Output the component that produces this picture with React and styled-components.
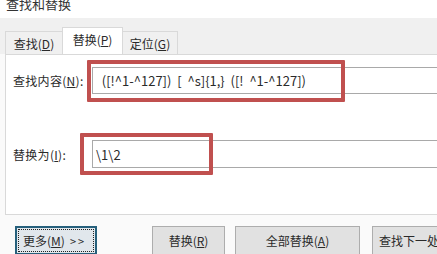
import React from "react";
import styled, { createGlobalStyle } from "styled-components";

const Global = createGlobalStyle`
  html, body { margin: 0; padding: 0; background: #fafafa; }
  body { font-family: "Noto Sans CJK SC", "Liberation Sans", sans-serif; }
`;

const Dialog = styled.div`
  width: 437px;
  height: 254px;
  overflow: hidden;
  background: #fafafa;
  display: flex;
  flex-direction: column;
  color: #2a2a2a;
  font-size: 12px;
`;

const TitleBar = styled.div`
  height: 18px;
  background: #fff;
  padding-left: 6px;
  overflow: hidden;
  flex: none;
`;

const Title = styled.div`
  font-size: 13px;
  line-height: 13px;
  margin-top: -3px;
  color: #333;
`;

const TabStrip = styled.div`
  height: 36px;
  background: #f0f0f0;
  padding-left: 5px;
  display: flex;
  align-items: flex-end;
  flex: none;
`;

const Tab = styled.div`
  box-sizing: border-box;
  width: ${(p) => p.w}px;
  height: ${(p) => (p.active ? 27 : 23)}px;
  background: ${(p) => (p.active ? "#fff" : "#f0f0f0")};
  border: 1px solid #d9d9d9;
  border-bottom: none;
  margin-left: ${(p) => (p.first ? 0 : -1)}px;
  display: flex;
  align-items: center;
  justify-content: center;
  padding-bottom: ${(p) => (p.active ? 3 : 0)}px;
  font-size: 12px;
  position: relative;
  z-index: ${(p) => (p.active ? 1 : 0)};
`;

const Panel = styled.div`
  box-sizing: border-box;
  margin-left: 5px;
  height: 161px;
  background: #fff;
  border: 1px solid #d9d9d9;
  border-right: none;
  padding: 12px 0 0 7px;
  display: flex;
  flex-direction: column;
  gap: 46px;
  flex: none;
`;

const Row = styled.div`
  display: flex;
  align-items: center;
`;

const Label = styled.div`
  width: 79px;
  flex: none;
  font-size: 12px;
  white-space: nowrap;
  letter-spacing: 0.3px;
`;

const InputWrap = styled.div`
  position: relative;
  flex: 1;
`;

const Input = styled.div`
  box-sizing: border-box;
  height: ${(p) => p.h}px;
  border: 1px solid #a9a9a9;
  border-right: none;
  background: #fff;
  padding-left: 3px;
  display: flex;
  align-items: center;
  white-space: pre;
  font-family: "Noto Sans CJK SC", "Liberation Sans", sans-serif;
  font-size: ${(p) => p.fs}px;
  color: #2a2a2a;
`;

const Highlight = styled.div`
  position: absolute;
  box-sizing: border-box;
  left: ${(p) => p.x}px;
  top: -7px;
  width: ${(p) => p.w}px;
  height: 42px;
  border: 4px solid #c0504f;
  border-radius: 1px;
  pointer-events: none;
`;

const ButtonRow = styled.div`
  display: flex;
  padding: 11px 0 0 15px;
  flex: none;
`;

const Button = styled.div`
  box-sizing: border-box;
  flex: none;
  width: ${(p) => p.w}px;
  height: 29px;
  margin-left: ${(p) => p.ml || 0}px;
  background: ${(p) => (p.focus ? "#e1e7ec" : "#e1e1e1")};
  border: ${(p) => (p.focus ? "2px solid #26607c" : "1px solid #adadad")};
  display: flex;
  align-items: center;
  justify-content: ${(p) => (p.left ? "flex-start" : "center")};
  padding-left: ${(p) => (p.left ? 6 : 0)}px;
  font-size: 12px;
  white-space: nowrap;
  position: relative;
  &::after {
    content: "";
    display: ${(p) => (p.focus ? "block" : "none")};
    position: absolute;
    inset: 1px;
    border: 1px dotted #222;
  }
`;

const Arrows = styled.span`
  margin-left: 5px;
  letter-spacing: 2px;
  font-size: 11px;
`;

export default function App() {
  return (
    <>
      <Global />
      <Dialog>
        <TitleBar>
          <Title>查找和替换</Title>
        </TitleBar>
        <TabStrip>
          <Tab first w={58}>
            查找(<u>D</u>)
          </Tab>
          <Tab active w={61}>
            替换(<u>P</u>)
          </Tab>
          <Tab w={56}>
            定位(<u>G</u>)
          </Tab>
        </TabStrip>
        <Panel>
          <Row>
            <Label>
              查找内容(<u>N</u>):
            </Label>
            <InputWrap>
              <Input h={27} fs={13}>{"  ([!^1-^127])  [  ^s]{1,}  ([!  ^1-^127])"}</Input>
              <Highlight x={-5} w={258} />
            </InputWrap>
          </Row>
          <Row>
            <Label>
              替换为(<u>I</u>):
            </Label>
            <InputWrap>
              <Input h={28} fs={13}>{"\\1\\2"}</Input>
              <Highlight x={-12} w={133} />
            </InputWrap>
          </Row>
        </Panel>
        <ButtonRow>
          <Button focus left w={82}>
            更多(<u>M</u>)<Arrows>&gt;&gt;</Arrows>
          </Button>
          <Button w={73} ml={55}>
            替换(<u>R</u>)
          </Button>
          <Button w={125} ml={10}>
            全部替换(<u>A</u>)
          </Button>
          <Button left w={90} ml={12}>
            查找下一处(<u>F</u>)
          </Button>
        </ButtonRow>
      </Dialog>
    </>
  );
}
